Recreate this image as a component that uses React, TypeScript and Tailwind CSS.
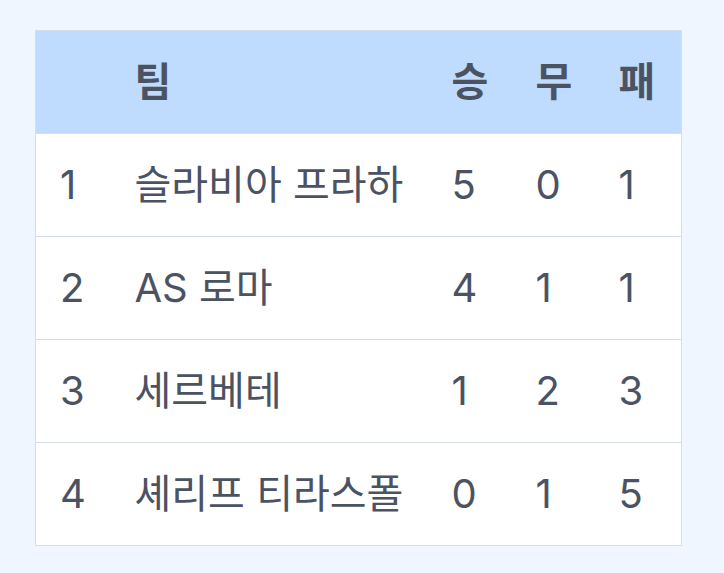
const rows = [
  { rank: 1, team: "슬라비아 프라하", w: 5, d: 0, l: 1 },
  { rank: 2, team: "AS 로마", w: 4, d: 1, l: 1 },
  { rank: 3, team: "세르베테", w: 1, d: 2, l: 3 },
  { rank: 4, team: "셰리프 티라스폴", w: 0, d: 1, l: 5 },
];

export default function App() {
  return (
    <div
      className="min-h-screen bg-[#eff6ff] pt-[30px] pl-[35px]"
      style={{ fontFamily: 'Inter, "Noto Sans CJK KR", sans-serif' }}
    >
      <table className="table-fixed border-collapse border border-[#d6dde9] w-[646px] text-[40px] text-[#4b5363]">
        <colgroup>
          <col className="w-[75px]" />
          <col className="w-[317px]" />
          <col className="w-[84px]" />
          <col className="w-[83px]" />
          <col className="w-[87px]" />
        </colgroup>
        <thead>
          <tr className="h-[103px] bg-[#bfdbfe] border-b border-[#d6dde9]">
            <th className="px-6 text-left font-semibold"></th>
            <th className="px-6 text-left font-semibold">팀</th>
            <th className="px-6 text-left font-semibold">승</th>
            <th className="px-6 text-left font-semibold">무</th>
            <th className="px-6 text-left font-semibold">패</th>
          </tr>
        </thead>
        <tbody>
          {rows.map((r) => (
            <tr key={r.rank} className="h-[103px] bg-white border-b border-[#d6dde9]">
              <td className="px-6">{r.rank}</td>
              <td className="px-6 whitespace-nowrap">{r.team}</td>
              <td className="px-6">{r.w}</td>
              <td className="px-6">{r.d}</td>
              <td className="px-6">{r.l}</td>
            </tr>
          ))}
        </tbody>
      </table>
    </div>
  );
}
